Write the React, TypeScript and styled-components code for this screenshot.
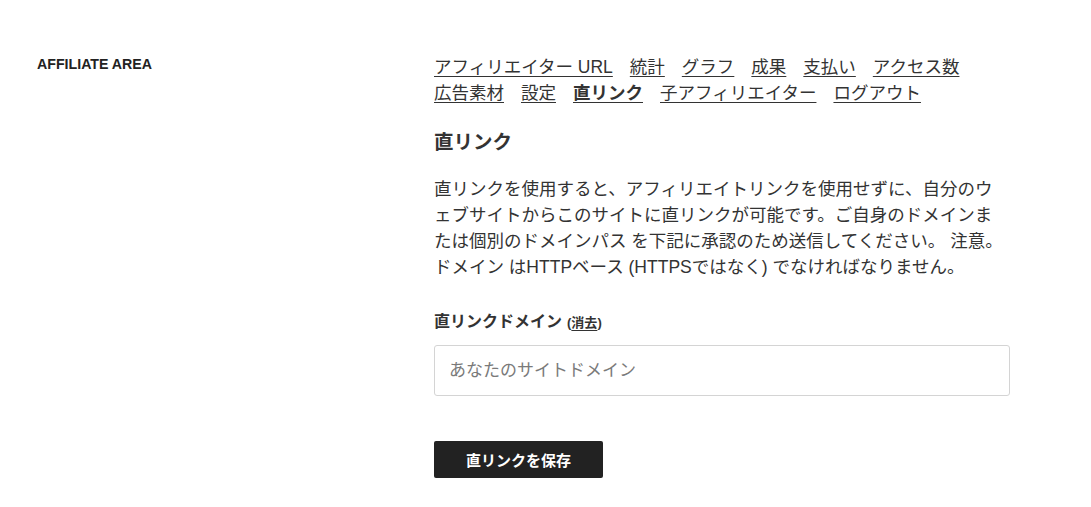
import React from 'react';
import styled, { createGlobalStyle } from 'styled-components';

const GlobalStyle = createGlobalStyle`
  html, body {
    margin: 0;
    padding: 0;
    background: #fff;
  }
  body {
    font-family: "Liberation Sans", "Noto Sans CJK JP", sans-serif;
    color: #333;
  }
`;

const Page = styled.div`
  display: grid;
  grid-template-columns: 397px 576px;
  padding: 52px 0 0 37px;
`;

const AreaLabel = styled.div`
  font-size: 14.2px;
  font-weight: 700;
  line-height: 24px;
  color: #222;
`;

const Content = styled.div`
  display: flex;
  flex-direction: column;
`;

const Nav = styled.nav`
  display: flex;
  flex-wrap: wrap;
  column-gap: 17px;
  margin-top: 2px;
  font-size: 17.5px;
  line-height: 26px;
`;

const NavLink = styled.a<{ $active?: boolean }>`
  color: #333;
  font-weight: ${p => (p.$active ? 700 : 400)};
  text-decoration: underline;
  text-underline-offset: 3px;
  text-decoration-thickness: 1px;
  white-space: nowrap;
  cursor: pointer;
`;

const Heading = styled.h2`
  margin: 22px 0 0;
  font-size: 19.5px;
  line-height: 28px;
  font-weight: 700;
  color: #333;
`;

const Paragraph = styled.p`
  margin: 20px 0 0;
  font-size: 17.5px;
  line-height: 26px;
  color: #333;
  white-space: nowrap;
`;

const FieldLabel = styled.label`
  display: block;
  margin-top: 30px;
  font-size: 16px;
  font-weight: 700;
  line-height: 24px;
  color: #333;
`;

const ClearLink = styled.span`
  font-size: 13px;
  font-weight: 700;
  margin-left: 5px;

  a {
    color: #333;
    text-decoration: underline;
    text-underline-offset: 3px;
  }
`;

const Input = styled.input`
  box-sizing: border-box;
  margin-top: 10px;
  width: 576px;
  height: 51px;
  padding: 0 14px;
  border: 1px solid #d4d4d4;
  border-radius: 3px;
  font-family: "Liberation Sans", "Noto Sans CJK JP", sans-serif;
  font-size: 17px;
  color: #333;
  outline: none;

  &::placeholder {
    color: #7a7a7a;
  }
`;

const SaveButton = styled.button`
  margin-top: 45px;
  width: 169px;
  height: 37px;
  border: none;
  border-radius: 2px;
  background: #222;
  color: #fff;
  font-family: "Liberation Sans", "Noto Sans CJK JP", sans-serif;
  font-size: 15px;
  font-weight: 700;
  cursor: pointer;
`;

const links = [
  'アフィリエイター URL',
  '統計',
  'グラフ',
  '成果',
  '支払い',
  'アクセス数',
  '広告素材',
  '設定',
  '直リンク',
  '子アフィリエイター',
  'ログアウト',
];

export default function App() {
  return (
    <>
      <GlobalStyle />
      <Page>
        <AreaLabel>AFFILIATE AREA</AreaLabel>
        <Content>
          <Nav>
            {links.map(l => (
              <NavLink key={l} $active={l === '直リンク'}>
                {l}
              </NavLink>
            ))}
          </Nav>
          <Heading>直リンク</Heading>
          <Paragraph>
            直リンクを使用すると、アフィリエイトリンクを使用せずに、自分のウ
            <br />
            ェブサイトからこのサイトに直リンクが可能です。ご自身のドメインま
            <br />
            たは個別のドメインパス を下記に承認のため送信してください。 注意。
            <br />
            ドメイン はHTTPベース (HTTPSではなく) でなければなりません。
          </Paragraph>
          <FieldLabel>
            直リンクドメイン
            <ClearLink>
              (<a>消去</a>)
            </ClearLink>
          </FieldLabel>
          <div>
            <Input placeholder="あなたのサイトドメイン" />
          </div>
          <div>
            <SaveButton>直リンクを保存</SaveButton>
          </div>
        </Content>
      </Page>
    </>
  );
}
